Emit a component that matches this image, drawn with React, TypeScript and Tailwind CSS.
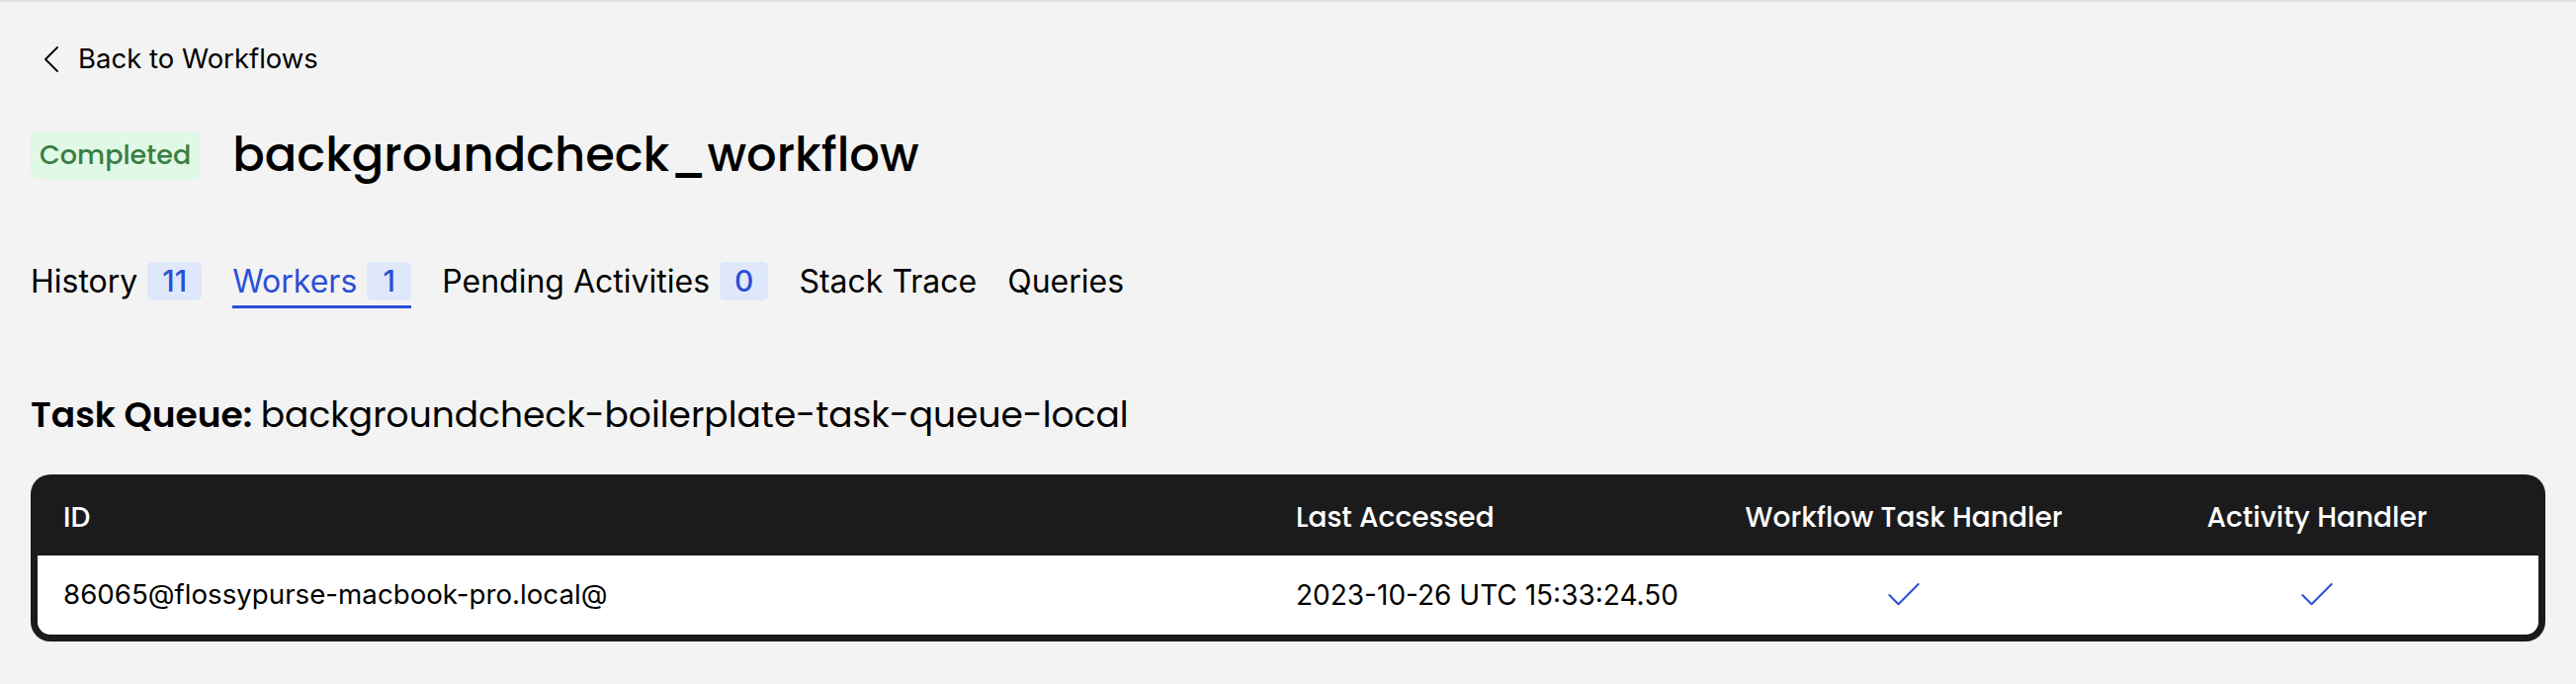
import { Check } from 'lucide-react'

const tabs = [
  { label: 'History', count: '11', active: false },
  { label: 'Workers', count: '1', active: true },
  { label: 'Pending Activities', count: '0', active: false },
  { label: 'Stack Trace', count: null, active: false },
  { label: 'Queries', count: null, active: false },
]

const heading = "font-['Poppins','Inter',sans-serif]"

function Tab({ label, count, active }: { label: string; count: string | null; active: boolean }) {
  return (
    <div className="flex flex-col">
      <div className={`flex h-[39px] items-center gap-[10px] text-[32px] ${active ? 'text-[#2b4fd8]' : 'text-black'}`}>
        <span>{label}</span>
        {count && (
          <span className="flex h-[39px] min-w-[45px] items-center justify-center rounded-[5px] bg-[#dfe8fb] px-[15px] text-[30px] font-medium text-[#2b4fd8]">
            {count}
          </span>
        )}
      </div>
      <div className={`mt-[5px] h-[3px] ${active ? 'bg-[#2b4fd8]' : 'bg-transparent'}`} />
    </div>
  )
}

export default function App() {
  return (
    <div className="min-h-[692px] border-t-2 border-[#e2e2e2] bg-[#f3f3f3] px-[31px] font-['Inter',sans-serif] text-black">
      {/* Back link */}
      <div className="mt-[38px] flex h-[39px] items-center gap-[20px] pl-[14px] text-[27.5px]">
        <svg width="14" height="26" viewBox="0 0 14 26" fill="none" stroke="black" strokeWidth="1.8" strokeLinecap="round" strokeLinejoin="round">
          <polyline points="13,1 1,13 13,25" />
        </svg>
        <span>Back to Workflows</span>
      </div>

      {/* Title row */}
      <div className="mt-[54px] flex h-[48px] items-center gap-[33px]">
        <span className={`flex h-[48px] items-center rounded-[6px] bg-[#e0f8e6] px-[9px] text-[27px] font-medium text-[#3b7d45] ${heading}`}>
          Completed
        </span>
        <h1 className={`text-[48px] leading-none font-medium ${heading}`}>backgroundcheck_workflow</h1>
      </div>

      {/* Tabs */}
      <div className="mt-[84px] flex gap-[31px]">
        {tabs.map((t) => (
          <Tab key={t.label} {...t} />
        ))}
      </div>

      {/* Task queue */}
      <div className={`mt-[86px] text-[36px] leading-[43px] ${heading}`}>
        <span className="font-semibold">Task Queue: </span>
        <span>backgroundcheck-boilerplate-task-queue-local</span>
      </div>

      {/* Workers table */}
      <div className="mt-[39px] rounded-[20px] bg-[#1b1b1d] px-[7px] pb-[7px]">
        <div className={`grid h-[82px] grid-cols-[1247px_447px_388px_1fr] items-center pt-[5px] text-[28px] font-medium text-white ${heading}`}>
          <div className="px-[26px]">ID</div>
          <div className="px-[26px]">Last Accessed</div>
          <div className="text-center">Workflow Task Handler</div>
          <div className="text-center">Activity Handler</div>
        </div>
        <div className="grid h-[80px] grid-cols-[1247px_447px_388px_1fr] items-center rounded-b-[13px] bg-white text-[28px]">
          <div className="px-[26px] text-[27.7px]">86065@flossypurse-macbook-pro.local@</div>
          <div className="px-[26px]">2023-10-26 UTC 15:33:24.50</div>
          <div className="flex justify-center">
            <Check size={44} strokeWidth={1.1} className="text-[#2b4fd8]" />
          </div>
          <div className="flex justify-center">
            <Check size={44} strokeWidth={1.1} className="text-[#2b4fd8]" />
          </div>
        </div>
      </div>
    </div>
  )
}
